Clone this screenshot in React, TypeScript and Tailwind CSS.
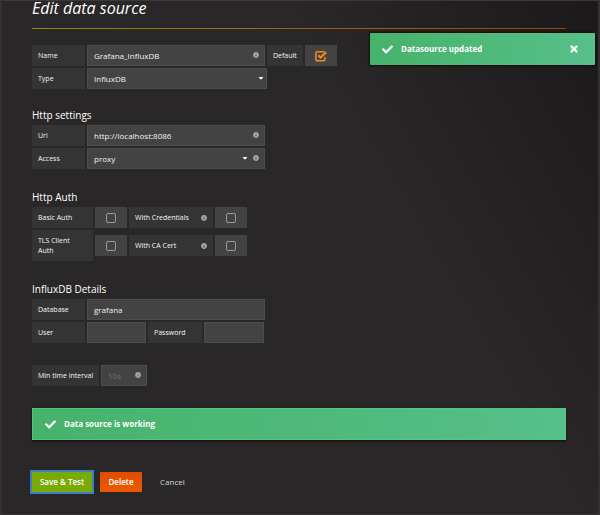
import type { ReactNode } from "react";
import { FaCaretDown, FaCheck, FaInfoCircle, FaTimes } from "react-icons/fa";

const labelBase = "flex min-h-[21px] shrink-0 items-center bg-[#343434] px-1.5 text-[7px] leading-[10px] font-medium text-[#f4f4f4]";
const fieldBase =
  "h-[21px] w-full rounded-none border border-[#4d4d4d] bg-[#434343] px-1.5 text-[8px] leading-3 font-medium text-[#f0f0f0] outline-none placeholder:text-[#737373]";

export default function App() {
  return (
    <div className="relative min-h-screen border-x-2 border-t border-b border-x-[#333131] border-t-[#3b3939] border-b-[#343232] bg-[#292727] bg-[linear-gradient(60deg,#292727_0%,#292727_65%,#1b1919_100%)] pr-8 pl-[30px] font-['Open_Sans','Noto_Sans',sans-serif] text-[#f0f0f0]">
      <header>
        <h1 className="h-[27px] text-[16px] leading-[14px] font-normal text-white italic">Edit data source</h1>
        <div className="h-px bg-linear-to-r from-[#988400] to-[#a33a08]" />
      </header>

      <form onSubmit={(e) => e.preventDefault()}>
        <div className="mt-4 flex flex-col gap-0.5">
          <Row>
            <Label htmlFor="name" className="w-[53px]">Name</Label>
            <Field className="w-[178px]" hint>
              <input id="name" defaultValue="Grafana_InfluxDB" className={fieldBase} />
            </Field>
            <Label htmlFor="default" className="w-9">Default</Label>
            <Checkbox id="default" defaultChecked />
          </Row>
          <Row>
            <Label htmlFor="type" className="w-[53px]">Type</Label>
            <Field className="w-[180px]">
              <select id="type" className={`${fieldBase} appearance-none`}>
                <option>InfluxDB</option>
              </select>
              <FaCaretDown className="pointer-events-none absolute top-1.5 right-0.5 size-2" />
            </Field>
          </Row>
        </div>

        <div className="mt-[18px] flex flex-col gap-5">
          <Section title="Http settings">
            <Row>
              <Label htmlFor="url" className="w-[53px]">Url</Label>
              <Field className="w-[178px]" hint>
                <input id="url" defaultValue="http://localhost:8086" className={fieldBase} />
              </Field>
            </Row>
            <Row>
              <Label htmlFor="access" className="w-[53px]">Access</Label>
              <Field className="w-[178px]" hint>
                <select id="access" className={`${fieldBase} appearance-none`}>
                  <option>proxy</option>
                </select>
                <FaCaretDown className="pointer-events-none absolute top-1.5 right-4 size-2" />
              </Field>
            </Row>
          </Section>

          <Section title="Http Auth">
            <Row>
              <Label htmlFor="basic-auth" className="w-[61px]">Basic Auth</Label>
              <Checkbox id="basic-auth" />
              <Label htmlFor="credentials" className="w-[84px]" hint>With Credentials</Label>
              <Checkbox id="credentials" />
            </Row>
            <Row>
              <Label htmlFor="tls-auth" className="h-[31px] w-[61px] pr-4">TLS Client Auth</Label>
              <Checkbox id="tls-auth" />
              <Label htmlFor="ca-cert" className="w-[84px]" hint>With CA Cert</Label>
              <Checkbox id="ca-cert" />
            </Row>
          </Section>

          <Section title="InfluxDB Details">
            <Row>
              <Label htmlFor="database" className="w-[53px]">Database</Label>
              <Field className="w-[178px]">
                <input id="database" defaultValue="grafana" className={fieldBase} />
              </Field>
            </Row>
            <Row>
              <Label htmlFor="user" className="w-[53px]">User</Label>
              <Field className="w-[59px]">
                <input id="user" className={fieldBase} />
              </Field>
              <Label htmlFor="password" className="w-[54px]">Password</Label>
              <Field className="w-[60px]">
                <input id="password" type="password" className={fieldBase} />
              </Field>
            </Row>
          </Section>
        </div>

        <div className="mt-[22px]">
          <Row>
            <Label htmlFor="interval" className="w-[67px] whitespace-nowrap">Min time interval</Label>
            <Field className="w-[46px]" hint>
              <input id="interval" placeholder="10s" className={fieldBase} />
            </Field>
          </Row>
        </div>

        <div role="status" className="mt-[22px] flex h-8 items-center border border-[#50c67f] bg-linear-to-r from-[#47b26a] to-[#57bf89] px-3 shadow-[0_1px_2px_#180812]">
          <FaCheck className="size-[11px] text-white" />
          <span className="ml-2 text-[8px] leading-3 font-bold text-white">Data source is working</span>
        </div>

        <div className="mt-8 flex h-5 items-center gap-2">
          <button type="submit" className="h-5 w-[60px] bg-[#7aaa05] text-[8px] leading-3 font-semibold text-white outline-2 outline-[#3a7fc8]">
            Save &amp; Test
          </button>
          <button type="button" className="h-5 w-[42px] rounded-[1px] bg-linear-to-b from-[#e04d00] to-[#ed5900] text-[8px] leading-3 font-semibold text-white">
            Delete
          </button>
          <a href="#" className="ml-2.5 text-[8px] leading-3 text-[#d8d8d8]">Cancel</a>
        </div>
      </form>

      <div role="alert" className="absolute top-8 right-[3px] flex h-8 w-[225px] items-center rounded-[1px] bg-linear-to-r from-[#47b26a] to-[#57bf89] pr-4 pl-3 shadow-[0_0_2px_1px_#160a12]">
        <FaCheck className="size-[11px] text-white" />
        <span className="ml-2 text-[8px] leading-3 font-bold text-white">Datasource updated</span>
        <button type="button" aria-label="Close" className="ml-auto text-white">
          <FaTimes className="size-2.5" stroke="currentColor" strokeWidth="30" />
        </button>
      </div>
    </div>
  );
}

function Section({ title, children }: { title: string; children: ReactNode }) {
  return (
    <section>
      <h2 className="mb-0.5 h-4 text-[10px] leading-4 font-medium text-white">{title}</h2>
      <div className="flex flex-col gap-0.5">{children}</div>
    </section>
  );
}

function Row({ children }: { children: ReactNode }) {
  return <div className="flex items-center gap-0.5">{children}</div>;
}

type LabelProps = {
  htmlFor: string;
  className: string;
  hint?: boolean;
  children: ReactNode;
};

function Label({ htmlFor, className, hint, children }: LabelProps) {
  return (
    <label htmlFor={htmlFor} className={`${labelBase} ${className}`}>
      {children}
      {hint ? <FaInfoCircle className="ml-auto size-1.5 text-[#a8a8a8]" /> : null}
    </label>
  );
}

function Field({ className, hint, children }: { className: string; hint?: boolean; children: ReactNode }) {
  return (
    <div className={`relative flex ${className}`}>
      {children}
      {hint ? <FaInfoCircle className="pointer-events-none absolute top-[7px] right-1.5 size-1.5 text-[#a8a8a8]" /> : null}
    </div>
  );
}

function Checkbox({ id, defaultChecked }: { id: string; defaultChecked?: boolean }) {
  return (
    <div className="relative flex h-[21px] w-8 items-center justify-center bg-[#434343]">
      <input
        id={id}
        type="checkbox"
        defaultChecked={defaultChecked}
        className="peer size-2.5 appearance-none rounded-[2px] border border-[#999] checked:opacity-0"
      />
      <svg viewBox="0 0 12 12" className="pointer-events-none absolute hidden size-3 text-[#f58a1c] peer-checked:block" fill="none" stroke="currentColor" aria-hidden>
        <path d="M10 7v2.300c0 .9-.6 1.500-1.500 1.500H2.400C1.500 10.800.900 10.200.900 9.300V3.200C.900 2.300 1.500 1.700 2.400 1.700h6.100c.4 0 .7.1 1 .3" strokeWidth="1.5" />
        <path d="M3.200 5.300l2.300 2.300 5.600-5.400" strokeWidth="2.100" />
      </svg>
    </div>
  );
}
